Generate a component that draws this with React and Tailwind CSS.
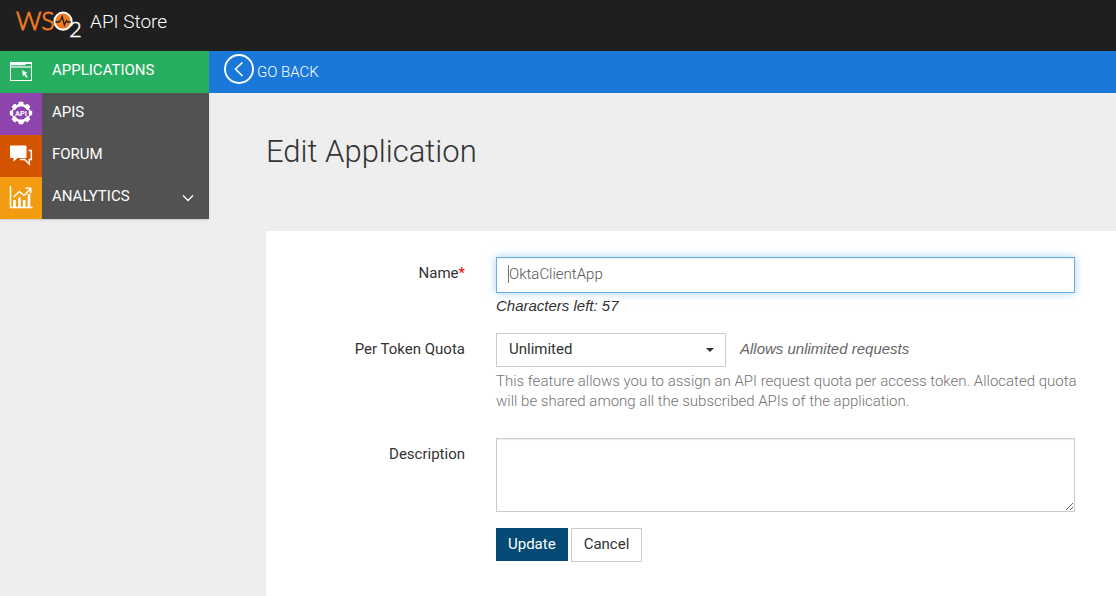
import React from "react";

function Logo() {
  return (
    <svg width="68" height="40" viewBox="0 0 68 40" role="img" aria-label="WSO2" className="shrink-0 overflow-visible">
      <text x="0" y="28" fontSize="25" fontWeight="300" fill="#f47b20" stroke="#f47b20" strokeWidth="0.8" fontFamily="Lato, sans-serif">WS</text>
      <circle cx="47" cy="19.200" r="8.600" fill="#f47b20" stroke="#fff" strokeWidth="2" />
      <path d="M39.500 20h3.500l1.500-1.500 1.700-4 2.200 8.500 2-4.500 1 1.500h3.500" fill="none" stroke="#1f1f1f" strokeWidth="1.300" />
      <text x="53" y="34.500" fontSize="22" fontWeight="300" fill="#fff" stroke="#fff" strokeWidth="0.500" fontFamily="Lato, sans-serif">2</text>
    </svg>
  );
}

function WindowIcon() {
  return (
    <svg width="24" height="24" viewBox="0 0 24 24" fill="none" stroke="#fff" aria-hidden="true">
      <rect x="1.500" y="3.500" width="21" height="18" strokeWidth="1" />
      <path d="M1 4h22" strokeWidth="2" />
      <path d="M1 5.500h15.500" strokeWidth="1.500" />
      <path d="M1 8h22" strokeWidth="1.200" />
      <path d="M13 11l5.500 3-2 .8 2.200 3.300-1.300.9-2.200-3.300-1.300 1.600z" fill="#fff" stroke="none" />
    </svg>
  );
}

function ApiIcon() {
  const teeth = [0, 45, 90, 135, 180, 225, 270, 315];
  return (
    <svg width="24" height="24" viewBox="0 0 24 24" aria-hidden="true">
      {teeth.map((a) => (
        <rect key={a} x="9.500" y="0.800" width="5" height="4.500" rx="1" fill="#fff" transform={`rotate(${a} 12 12)`} />
      ))}
      <circle cx="12" cy="12" r="8" fill="none" stroke="#fff" strokeWidth="2.600" />
      <rect x="4.200" y="9" width="15.600" height="6" fill="#8e44ad" />
      <text x="12" y="14.500" textAnchor="middle" fontSize="7.500" fontWeight="700" fill="#fff" fontFamily="Roboto, sans-serif">API</text>
    </svg>
  );
}

function ForumIcon() {
  return (
    <svg width="24" height="24" viewBox="0 0 24 24" aria-hidden="true">
      <path d="M2 2.500h14.500q1 0 1 1v10.500q0 1-1 1H8.500L4.500 18.800v-3.800H2q-1 0-1-1V3.500q0-1 1-1z" fill="#fff" />
      <path d="M19.500 7.500h2.800v9h-2v4.500l-4.600-4.500H11" fill="none" stroke="#fff" strokeWidth="1.500" />
    </svg>
  );
}

function ChartIcon() {
  return (
    <svg width="24" height="24" viewBox="0 0 24 24" fill="none" stroke="#fff" aria-hidden="true">
      <path d="M1.500 1v21.500H23.500" strokeWidth="1.500" />
      <path d="M5.500 22v-7M10.500 22v-9.500M15.200 22v-7M20 22v-13" strokeWidth="2.600" />
      <path d="M4.500 12l6-5.500 4.500 4 6.500-6.500M16.500 3.300h5.200v5" strokeWidth="1.600" />
    </svg>
  );
}

const items = [
  { name: "APPLICATIONS", Icon: WindowIcon, row: "bg-[#27ae60]", tile: "bg-[#27ae60]" },
  { name: "APIS", Icon: ApiIcon, row: "bg-[#525252]", tile: "bg-[#8e44ad]" },
  { name: "FORUM", Icon: ForumIcon, row: "bg-[#525252]", tile: "bg-[#d35400]" },
  { name: "ANALYTICS", Icon: ChartIcon, row: "bg-[#525252]", tile: "bg-[#f39c12]", more: true },
];

function Sidebar() {
  return (
    <nav className="w-[209px] shrink-0 self-start shadow-sm">
      {items.map(({ name, Icon, row, tile, more }) => (
        <a key={name} href="#" className={`flex h-[42px] items-center text-white ${row}`}>
          <span className={`flex h-full w-[42px] items-center justify-center pb-[3px] ${tile}`}>
            <Icon />
          </span>
          <span className="flex-1 pb-1 pl-[10px] text-[15px] leading-5">{name}</span>
          {more && (
            <svg width="12" height="8" viewBox="0 0 12 8" fill="none" stroke="#fff" strokeWidth="1.4" className="mr-[15px]" aria-hidden="true">
              <path d="M1 1.500l5 5 5-5" />
            </svg>
          )}
        </a>
      ))}
    </nav>
  );
}

const label = "text-right text-[15px] leading-5 text-[#333]";

export default function App() {
  return (
    <div className="flex min-h-screen flex-col bg-[#eee] font-[Roboto,sans-serif] text-[#333]">
      <header className="flex h-[51px] items-center bg-[#1f1f1f] pb-2 pl-4">
        <a href="#" className="flex items-center gap-[6px] text-white">
          <Logo />
          <span className="text-[19px] leading-6 font-light">API Store</span>
        </a>
      </header>
      <div className="flex flex-1">
        <Sidebar />
        <div className="flex min-w-0 flex-1 flex-col">
          <div className="flex h-[42px] items-center bg-[#1a78d8] pl-[15px]">
            <a href="#" className="flex items-center gap-[3px] text-white">
              <svg width="30" height="30" viewBox="0 0 30 30" fill="none" stroke="#fff" className="mb-[6px]" aria-hidden="true">
                <circle cx="15" cy="15" r="14" strokeWidth="1.900" />
                <path d="M18.500 8.500L11.500 15l7 7" strokeWidth="1.600" />
              </svg>
              <span className="text-[15px] leading-5 font-light">GO BACK</span>
            </a>
          </div>
          <main className="flex flex-1 flex-col pl-[57px]">
            <h1 className="pt-[39px] pb-[59px] text-[31px] leading-10 font-light">Edit Application</h1>
            <form className="grid flex-1 grid-cols-[199px_1fr] content-start gap-x-[31px] bg-white pt-[26px] pr-[41px]">
              <label htmlFor="name" className={`${label} pt-[6px]`}>
                Name<span className="text-[#f00]">*</span>
              </label>
              <div className="pb-[17px]">
                <div className="relative">
                  <input
                    id="name"
                    type="text"
                    defaultValue="OktaClientApp"
                    className="block h-9 w-full border border-[#66afe9] bg-white px-3 pb-[2px] text-[15px] leading-5 font-light text-[#555] shadow-[inset_0_1px_1px_rgba(0,0,0,0.075),0_0_8px_rgba(102,175,233,0.6)] outline-none"
                  />
                  <span className="absolute top-2 left-3 h-[18px] w-px bg-[#777]" aria-hidden="true" />
                </div>
                <p className="pt-[3px] font-['Liberation_Sans',sans-serif] text-[15px] leading-5 italic">Characters left: 57</p>
              </div>

              <label htmlFor="quota" className={`${label} pt-[6px]`}>Per Token Quota</label>
              <div className="pb-[27px]">
                <div className="flex items-center gap-[14px]">
                  <div className="relative">
                    <select id="quota" className="block h-[34px] w-[230px] appearance-none border border-[#ccc] bg-white px-3 pb-[2px] text-[15px] leading-5 text-[#333] outline-none">
                      <option>Unlimited</option>
                    </select>
                    <svg width="8" height="4" viewBox="0 0 8 4" className="pointer-events-none absolute top-[15px] right-3" aria-hidden="true">
                      <path d="M0 0h8L4 4z" fill="#333" />
                    </svg>
                  </div>
                  <span className="pb-[2px] font-['Liberation_Sans',sans-serif] text-[15px] leading-5 text-[#666] italic">Allows unlimited requests</span>
                </div>
                <p className="-mr-3 pt-1 text-[15px] leading-5 font-light text-[#737373]">
                  This feature allows you to assign an API request quota per access token. Allocated quota will be shared among all the subscribed APIs of the application.
                </p>
              </div>

              <label htmlFor="description" className={`${label} pt-[6px]`}>Description</label>
              <textarea
                id="description"
                className="block h-[74px] w-full resize border border-[#ccc] bg-white px-3 py-[6px] text-[15px] leading-5 shadow-[inset_0_1px_1px_rgba(0,0,0,0.075)] outline-none"
              />

              <div className="col-start-2 flex items-start gap-[3px] py-4">
                <button type="submit" className="h-[33px] bg-[#044a75] px-3 pb-[2px] text-[15px] leading-5 text-white">Update</button>
                <button type="button" className="h-[34px] border border-[#ccc] bg-white px-3 pb-[2px] text-[15px] leading-5 text-[#333]">Cancel</button>
              </div>
            </form>
          </main>
        </div>
      </div>
    </div>
  );
}
